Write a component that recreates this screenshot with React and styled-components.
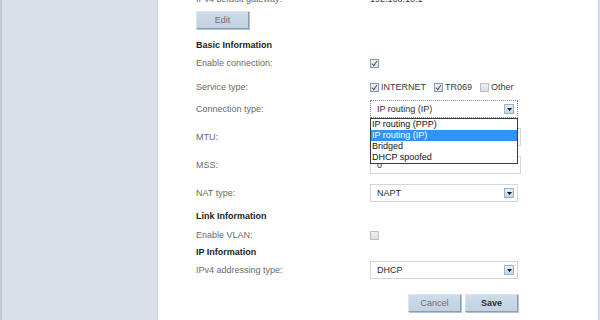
import React from "react";
import styled, { createGlobalStyle } from "styled-components";

const Global = createGlobalStyle`
  html, body { margin: 0; padding: 0; background: #fff; }
  body { font-family: "Liberation Sans", Arial, sans-serif; font-size: 9px; overflow: hidden; }
`;

const Page = styled.div`
  display: flex;
  width: 600px;
  height: 320px;
  overflow: hidden;
`;

const Sidebar = styled.div`
  width: 155px;
  flex: none;
  background: #d9e0ea;
  border-left: 2px solid #c3c9d2;
  border-right: 1px solid #cfd6e1;
`;

const Main = styled.div`
  flex: 1;
  background: #fff;
  border-right: 2px solid #d3dae6;
  padding-left: 38px;
`;

const Form = styled.div`
  display: flex;
  flex-direction: column;
  margin-top: -10px;
`;

const Row = styled.div`
  display: grid;
  grid-template-columns: 174px 151px;
  align-items: center;
  height: ${(p) => p.$h || 18}px;
  margin-top: ${(p) => p.$mt || 0}px;
`;

const Label = styled.span`
  color: #6a6a6a;
  white-space: nowrap;
`;

const Heading = styled.span`
  color: #1c1c1c;
  font-weight: bold;
  grid-column: 1 / span 2;
`;

const Value = styled.span`
  color: #3c3c3c;
`;

const Button = styled.button`
  width: 53px;
  height: 18px;
  padding: 0;
  font-family: "Liberation Sans", Arial, sans-serif;
  font-size: 9px;
  color: ${(p) => (p.$primary ? "#2a2a2a" : "#707070")};
  font-weight: ${(p) => (p.$primary ? "bold" : "normal")};
  background: linear-gradient(#cddbe9, #c2d2e2);
  border: 1px solid #dbe5ef;
  border-right-color: #8e9caf;
  border-bottom-color: #8e9caf;
  box-shadow: 1px 1px 0 #b5c0cd;
`;

const Controls = styled.div`
  display: flex;
  align-items: center;
  gap: ${(p) => p.$gap || 0}px;
  justify-content: ${(p) => p.$end ? "flex-end" : "flex-start"};
  width: ${(p) => p.$end ? "148px" : "auto"};
`;

const CheckItem = styled.label`
  display: flex;
  align-items: center;
  gap: 2px;
  color: #3a3a3a;
`;

const Box = styled.span`
  display: inline-flex;
  align-items: center;
  justify-content: center;
  width: 7px;
  height: 7px;
  border: 1px solid ${(p) => (p.$checked ? "#8c98a8" : "#b9bec6")};
  background: ${(p) =>
    p.$checked ? "linear-gradient(#f1f3f6, #dde2e9)" : "linear-gradient(#eceef1, #dcdfe3)"};
`;

const Check = ({ checked }) => (
  <Box $checked={checked}>
    {checked && (
      <svg width="7" height="7" viewBox="0 0 7 7">
        <path d="M1 3.6 L2.8 5.6 L6 1" fill="none" stroke="#4d5b6e" strokeWidth="1.1" />
      </svg>
    )}
  </Box>
);

const SelectWrap = styled.div`
  position: relative;
  width: 148px;
  height: 18px;
  box-sizing: border-box;
  border: 1px ${(p) => (p.$focus ? "dotted #8a8a8a" : "solid #d6d6d6")};
  background: #fff;
  display: flex;
  align-items: center;
  padding-left: 6px;
  color: #2e2e2e;
`;

const Arrow = styled.span`
  position: absolute;
  right: 3px;
  top: 3px;
  width: 10px;
  height: 10px;
  box-sizing: border-box;
  border: 1px solid #9fb3c6;
  background: linear-gradient(#e3eef8, #bfd4e8);
  display: flex;
  align-items: center;
  justify-content: center;
`;

const ListBox = styled.div`
  position: absolute;
  left: -1px;
  top: 17px;
  width: 148px;
  box-sizing: border-box;
  border: 1px solid #3a3a3a;
  background: #fff;
  z-index: 5;
  display: flex;
  flex-direction: column;
`;

const Option = styled.div`
  height: 11px;
  line-height: 11px;
  padding-left: 1px;
  color: ${(p) => (p.$active ? "#fff" : "#111")};
  background: ${(p) => (p.$active ? "#3392f5" : "transparent")};
`;

const Input = styled.div`
  width: 151px;
  height: 18px;
  box-sizing: border-box;
  border: 1px solid #d6d6d6;
  padding-left: 6px;
  display: flex;
  align-items: center;
  color: #2e2e2e;
`;

const Select = ({ value, focus, children }) => (
  <SelectWrap $focus={focus}>
    {value}
    <Arrow>
      <svg width="5" height="3" viewBox="0 0 5 3">
        <path d="M0 0 H5 L2.5 3 Z" fill="#111" />
      </svg>
    </Arrow>
    {children}
  </SelectWrap>
);

export default function App() {
  return (
    <>
      <Global />
      <Page>
        <Sidebar />
        <Main>
          <Form>
            <Row>
              <Label>IPv4 default gateway:</Label>
              <Value>192.168.10.1</Value>
            </Row>
            <Row $mt={3}>
              <Button>Edit</Button>
            </Row>
            <Row $h={16} $mt={8}>
              <Heading>Basic Information</Heading>
            </Row>
            <Row $mt={1}>
              <Label>Enable connection:</Label>
              <Controls>
                <Check checked />
              </Controls>
            </Row>
            <Row $mt={6}>
              <Label>Service type:</Label>
              <Controls $gap={8}>
                <CheckItem><Check checked />INTERNET</CheckItem>
                <CheckItem><Check checked />TR069</CheckItem>
                <CheckItem><Check />Other</CheckItem>
              </Controls>
            </Row>
            <Row $mt={4}>
              <Label>Connection type:</Label>
              <Select value="IP routing (IP)" focus>
                <ListBox>
                  <Option>IP routing (PPP)</Option>
                  <Option $active>IP routing (IP)</Option>
                  <Option>Bridged</Option>
                  <Option>DHCP spoofed</Option>
                </ListBox>
              </Select>
            </Row>
            <Row $mt={10}>
              <Label>MTU:</Label>
              <Input>1500</Input>
            </Row>
            <Row $mt={10}>
              <Label>MSS:</Label>
              <Input>0</Input>
            </Row>
            <Row $mt={10}>
              <Label>NAT type:</Label>
              <Select value="NAPT" />
            </Row>
            <Row $h={16} $mt={6}>
              <Heading>Link Information</Heading>
            </Row>
            <Row $mt={2}>
              <Label>Enable VLAN:</Label>
              <Controls>
                <Check />
              </Controls>
            </Row>
            <Row $h={16} $mt={0}>
              <Heading>IP Information</Heading>
            </Row>
            <Row $mt={1}>
              <Label>IPv4 addressing type:</Label>
              <Select value="DHCP" />
            </Row>
            <Row $mt={15}>
              <span />
              <Controls $gap={4} $end>
                <Button>Cancel</Button>
                <Button $primary>Save</Button>
              </Controls>
            </Row>
          </Form>
        </Main>
      </Page>
    </>
  );
}
